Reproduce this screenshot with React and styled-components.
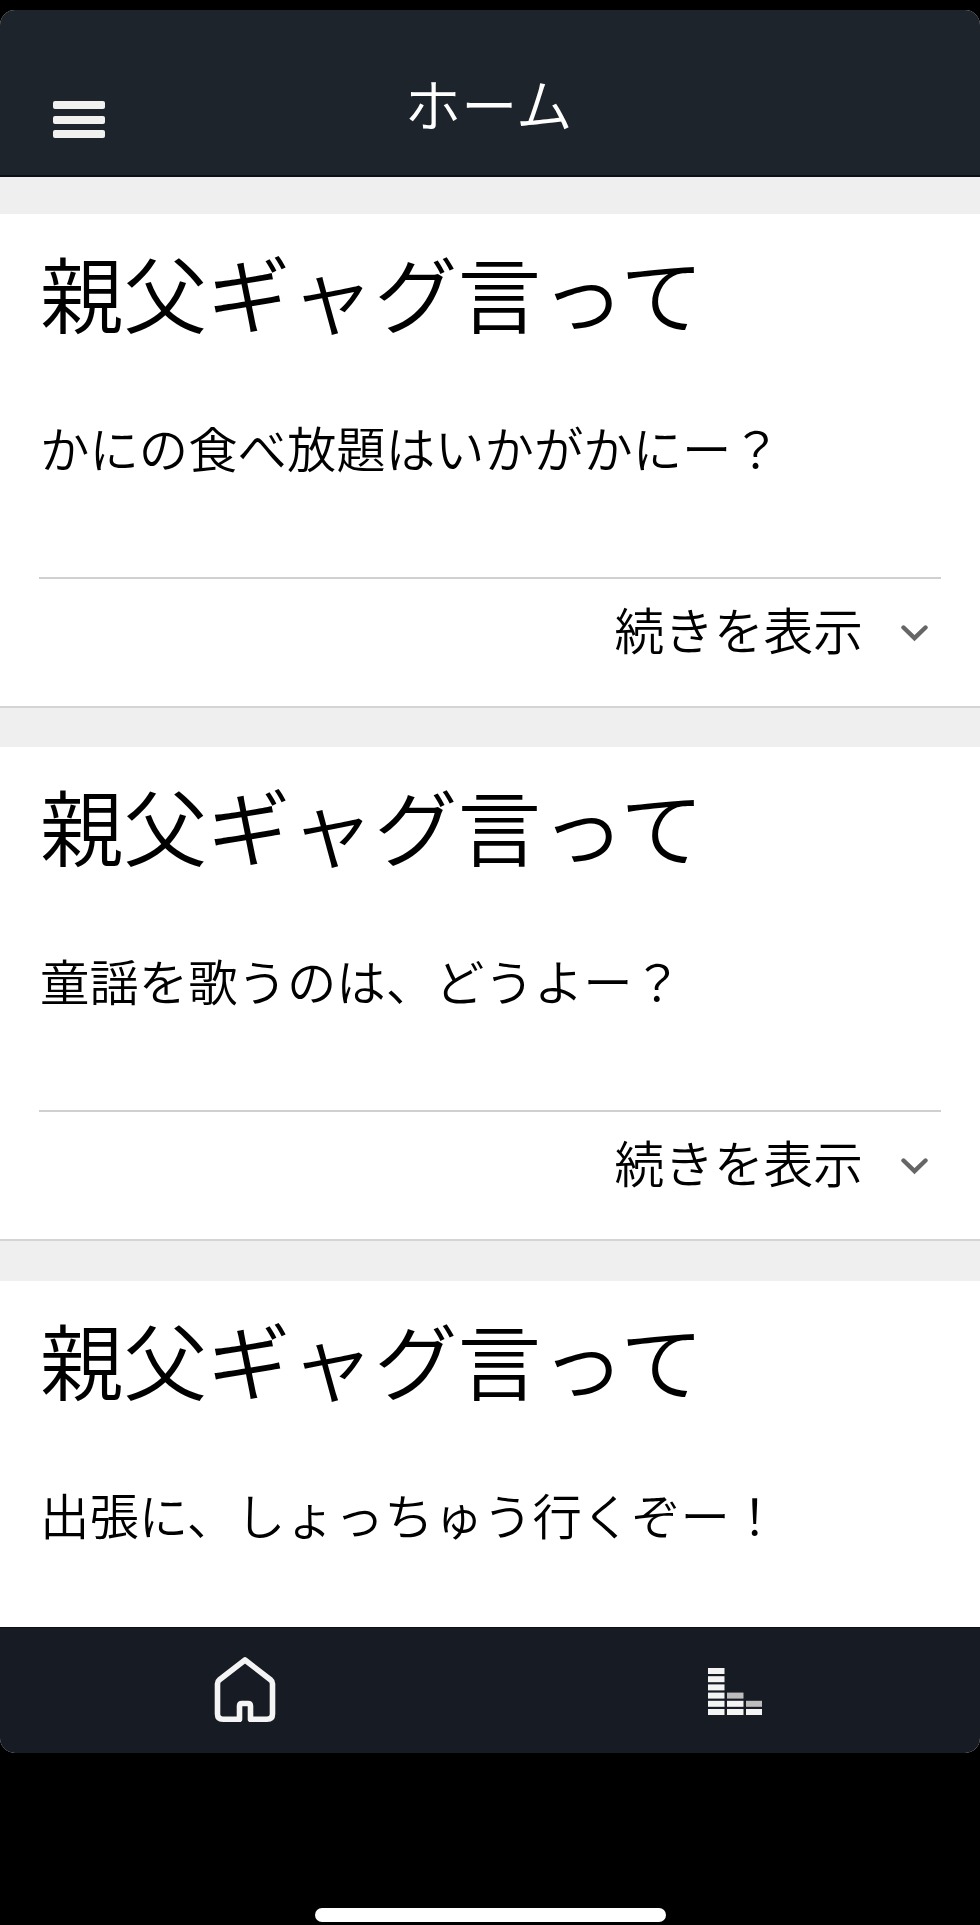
import React from 'react'
import styled, { createGlobalStyle } from 'styled-components'

const GlobalStyle = createGlobalStyle`
  * {
    box-sizing: border-box;
  }

  body {
    margin: 0;
    background-color: #000;
    font-family: 'Noto Sans CJK JP', sans-serif;
  }
`

const Screen = styled.div`
  width: 980px;
  height: 1925px;
  padding: 10px 0 3px;
  display: flex;
  flex-direction: column;
  align-items: center;
  background-color: #000;
  overflow: hidden;
`

const Window = styled.div`
  width: 100%;
  height: 1743px;
  display: flex;
  flex-direction: column;
  flex-shrink: 0;
  border-radius: 15px;
  overflow: hidden;
  background-color: #efefef;
`

const StyledHeader = styled.header`
  height: 167px;
  flex-shrink: 0;
  padding: 50px 56px 0 53px;
  display: grid;
  grid-template-columns: 52px 1fr 52px;
  align-items: start;
  background-color: #1e242b;
  border-bottom: 2px solid #0c0e1a;
`

const MenuButton = styled.button`
  margin: 41px 0 0;
  padding: 0;
  display: flex;
  flex-direction: column;
  gap: 6.5px;
  border: 0;
  background: none;

  & > span {
    width: 52px;
    height: 8px;
    border-radius: 2px;
    background-color: #f1f1ef;
  }
`

const Title = styled.h1`
  margin: 0;
  color: #fff;
  font-size: 56.5px;
  font-weight: 350;
  line-height: 84px;
  text-align: center;
`

const Feed = styled.main`
  flex: 1;
  min-height: 0;
  padding-top: 37px;
  display: flex;
  flex-direction: column;
  gap: 39.3px;
  overflow: hidden;
`

const StyledCard = styled.section`
  height: 494px;
  flex-shrink: 0;
  padding: 0 39px;
  background-color: #fff;
  border-bottom: 2px solid #d4d4d4;
`

const Question = styled.h2`
  margin: 0;
  padding: 17px 0 0 1px;
  color: #000;
  font-size: 83.5px;
  font-weight: 350;
  line-height: 120px;
  white-space: nowrap;
`

const Answer = styled.p`
  height: 226px;
  margin: 0;
  padding: 46px 0 0 1px;
  color: #000;
  font-size: 49.4px;
  font-weight: 350;
  line-height: 100px;
  white-space: nowrap;
`

const MoreButton = styled.button`
  width: 100%;
  height: 114px;
  padding: 0 13px 12px 0;
  display: flex;
  align-items: center;
  justify-content: flex-end;
  gap: 38px;
  border: 0;
  border-top: 2px solid #d0d0d0;
  background: none;
  color: #000;
  font-family: inherit;
  font-size: 49.7px;
  font-weight: 350;
  line-height: 1;

  & > svg {
    margin-top: 8px;
  }
`

const StyledTabBar = styled.nav`
  height: 126px;
  flex-shrink: 0;
  display: grid;
  grid-template-columns: 1fr 1fr;
  background-color: #171b23;
  border-top: 1px solid #0c0e1a;
`

const Tab = styled.a`
  display: flex;
  justify-content: center;
  align-items: flex-start;
  padding-top: ${props => props.$top};
`

const HomeIndicator = styled.div`
  width: 351px;
  height: 14px;
  margin-top: auto;
  flex-shrink: 0;
  border-radius: 7px;
  background-color: #fff;
`

const ChevronIcon = () => (
  <svg width='27' height='17' viewBox='0 0 27 17' fill='none'>
    <path d='M2.5 2.5 13.5 13.2 24.5 2.5' stroke='#666' strokeWidth='4.4' strokeLinecap='round' />
  </svg>
)

const HomeIcon = () => (
  <svg width='62' height='68' viewBox='0 0 62 68' fill='none'>
    <path
      d='M31 3 5.5 22.8Q3.5 24.4 3.5 26.8V57Q3.5 62.2 9 62.2H25.5V49Q25.5 46.5 28 46.5H34Q36.5 46.5 36.5 49V62.2H53Q58.5 62.2 58.5 57V26.8Q58.5 24.4 56.5 22.8Z'
      stroke='#f4f4f4'
      strokeWidth='5.6'
      strokeLinejoin='round'
    />
  </svg>
)

const columns = [
  { x: 0, count: 6, dim: false },
  { x: 19, count: 3, dim: true },
  { x: 38, count: 2, dim: true }
]

const LevelsIcon = () => (
  <svg width='54' height='47' viewBox='0 0 54 47'>
    {columns.map(({ x, count, dim }) =>
      Array.from({ length: count }, (_, i) => (
        <rect
          key={`${x}-${i}`}
          x={x}
          y={41 - i * 8.2}
          width='16.5'
          height='6'
          fill={dim && i === count - 1 ? '#bdbdbd' : '#f4f4f4'}
        />
      ))
    )}
  </svg>
)

const Header = () => (
  <StyledHeader>
    <MenuButton aria-label='メニュー'>
      <span />
      <span />
      <span />
    </MenuButton>
    <Title>ホーム</Title>
  </StyledHeader>
)

const Card = ({ question, answer, hasMore }) => (
  <StyledCard>
    <Question>{question}</Question>
    <Answer>{answer}</Answer>
    {hasMore && (
      <MoreButton>
        続きを表示
        <ChevronIcon />
      </MoreButton>
    )}
  </StyledCard>
)

const cards = [
  { answer: 'かにの食べ放題はいかがかにー？', hasMore: true },
  { answer: '童謡を歌うのは、どうよー？', hasMore: true },
  { answer: '出張に、しょっちゅう行くぞー！', hasMore: false }
]

const App = () => (
  <>
    <GlobalStyle />
    <Screen>
      <Window>
        <Header />
        <Feed>
          {cards.map(card => (
            <Card key={card.answer} question='親父ギャグ言って' {...card} />
          ))}
        </Feed>
        <StyledTabBar>
          <Tab $top='29px'><HomeIcon /></Tab>
          <Tab $top='40px'><LevelsIcon /></Tab>
        </StyledTabBar>
      </Window>
      <HomeIndicator />
    </Screen>
  </>
)

export default App
